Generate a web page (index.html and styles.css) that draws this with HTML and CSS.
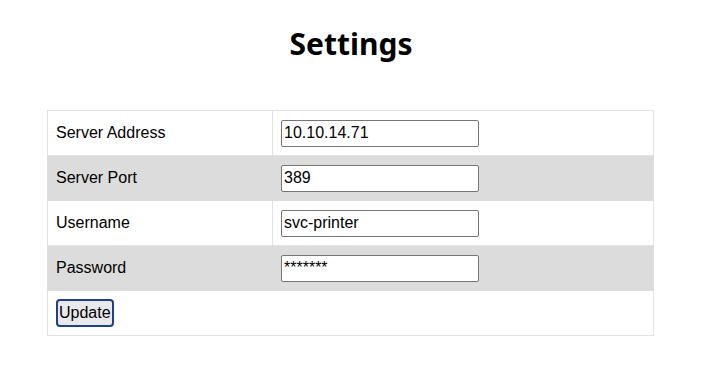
FILE: index.html
```html
<!DOCTYPE html>
<html lang="en">
<head>
    <meta charset="UTF-8">
    <meta name="viewport" content="width=device-width, initial-scale=1.0">
    <title>Settings</title>
    <link rel="stylesheet" href="styles.css">
</head>
<body>
    <h1>Settings</h1>

    <form class="settings">
        <table class="settings-table">
            <tr>
                <td class="label">Server Address</td>
                <td><input type="text" value="10.10.14.71"></td>
            </tr>
            <tr class="shade">
                <td class="label">Server Port</td>
                <td><input type="text" value="389"></td>
            </tr>
            <tr>
                <td class="label">Username</td>
                <td><input type="text" value="svc-printer"></td>
            </tr>
            <tr class="shade">
                <td class="label">Password</td>
                <td><input type="text" value="*******"></td>
            </tr>
            <tr>
                <td colspan="2"><button type="button" class="update-btn">Update</button></td>
            </tr>
        </table>
    </form>
</body>
</html>
```

FILE: styles.css
```css
* {
    box-sizing: border-box;
}

body {
    margin: 0;
    font-family: "Liberation Sans", Arial, sans-serif;
    font-size: 16px;
    color: #000;
    background: #fff;
}

h1 {
    margin: 26px 0 0;
    height: 84px;
    text-align: center;
    font-family: "Noto Sans", "Open Sans", sans-serif;
    font-size: 30px;
    font-weight: 700;
    line-height: 36px;
}

.settings-table {
    width: 607px;
    margin: 0 0 0 47px;
    border-collapse: collapse;
    border: 1px solid #e2e2e2;
}

.settings-table td {
    height: 45px;
    padding: 0 8px;
    border: 1px solid #e2e2e2;
    vertical-align: middle;
}

.settings-table td.label {
    width: 225px;
}

.settings-table tr.shade td {
    background: #dcdcdc;
    border-color: #dcdcdc;
}

input {
    width: 198px;
    height: 27px;
    padding: 1px 2px;
    border: 1px solid #767676;
    border-radius: 2px;
    font-family: "Liberation Sans", Arial, sans-serif;
    font-size: 16px;
    color: #000;
    background: #fff;
}

.update-btn {
    display: block;
    height: 28px;
    padding: 0 1px;
    border: 2px solid #1d3f8e;
    border-radius: 4px;
    background: #e9e9ed;
    font-family: "Liberation Sans", Arial, sans-serif;
    font-size: 16px;
    color: #000;
}
```
